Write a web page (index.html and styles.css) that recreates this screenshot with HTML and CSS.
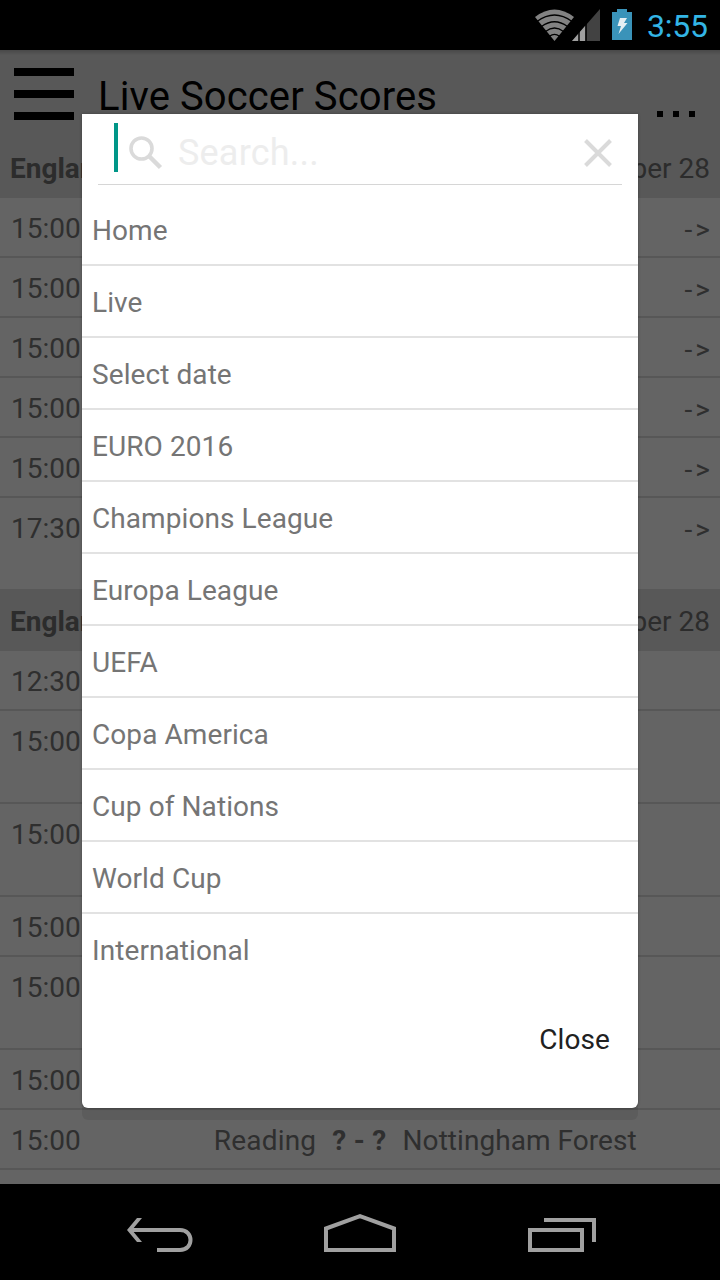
FILE: index.html
```
<!DOCTYPE html>
<html lang="en">
<head>
    <meta charset="UTF-8">
    <meta name="viewport" content="width=device-width, initial-scale=1.0">
    <title>Live Soccer Scores</title>
    <link rel="stylesheet" href="styles.css">
</head>
<body>
    <div class="status-bar">
        <svg class="signal-icons" width="68" height="34" viewBox="0 0 68 34">
            <!-- wifi -->
            <path d="M2 9 Q21.500 -6 41 9 L21.500 33 Z" fill="#828282"/>
            <path d="M4 13.500 Q21.500 0.500 39 13.500 M8.500 18.500 Q21.500 9 34.500 18.500 M12.500 23.500 Q21.500 16.500 30.500 23.500 M16.500 28.200 Q21.500 24.500 26.500 28.200" fill="none" stroke="#000" stroke-width="1.300"/>
            <!-- mobile signal -->
            <path d="M39 33 L67 1 V33 Z" fill="#424242"/>
            <path d="M39 33 L52.500 17.500 V33 Z" fill="#a0a0a0"/>
            <path d="M46 22 V33 M53 16 V33" stroke="#000" stroke-width="1.500"/>
        </svg>
        <svg class="battery-icon" width="20" height="31" viewBox="0 0 20 31">
            <path d="M5 0 H15 V3 H20 V31 H0 V3 H5 Z" fill="#3a93b9"/>
            <path d="M8 9 H15 L12 14 H15.500 L6.500 25 L9 17 H5.500 Z" fill="#e6eff3"/>
        </svg>
        <span class="clock">3:55</span>
    </div>

    <div class="app">
        <div class="app-bar">
            <div class="menu-icon"><i></i><i></i><i></i></div>
            <div class="app-title">Live Soccer Scores</div>
            <div class="more-icon"><i></i><i></i><i></i></div>
        </div>

        <div class="league"><b>England</b><span>November 28</span></div>
        <div class="match"><span>15:00</span><span class="arrow">-&gt;</span></div>
        <div class="match"><span>15:00</span><span class="arrow">-&gt;</span></div>
        <div class="match"><span>15:00</span><span class="arrow">-&gt;</span></div>
        <div class="match"><span>15:00</span><span class="arrow">-&gt;</span></div>
        <div class="match"><span>15:00</span><span class="arrow">-&gt;</span></div>
        <div class="match last"><span>17:30</span><span class="arrow">-&gt;</span></div>

        <div class="league"><b>England</b><span>November 28</span></div>
        <div class="match"><span>12:30</span></div>
        <div class="match tall"><span>15:00</span></div>
        <div class="match tall"><span>15:00</span></div>
        <div class="match"><span>15:00</span></div>
        <div class="match tall"><span>15:00</span></div>
        <div class="match"><span>15:00</span></div>
        <div class="match">
            <span>15:00</span>
            <span class="home">Reading</span>
            <b class="score">? - ?</b>
            <span class="away">Nottingham Forest</span>
        </div>
    </div>

    <div class="overlay">
        <div class="dialog">
            <div class="search">
                <i class="cursor"></i>
                <svg class="search-icon" width="34" height="34" viewBox="0 0 34 34" fill="none" stroke="#dadada">
                    <circle cx="12.500" cy="12.500" r="10.500" stroke-width="3.600"/>
                    <path d="M20.500 20.500 L31.500 31.500" stroke-width="4.500"/>
                </svg>
                <span class="placeholder">Search...</span>
                <svg class="clear-icon" width="28" height="28" viewBox="0 0 28 28" fill="none" stroke="#dadada" stroke-width="4">
                    <path d="M1.500 1.500 L26.500 26.500 M26.500 1.500 L1.500 26.500"/>
                </svg>
            </div>
            <ul class="menu">
                <li>Home</li>
                <li>Live</li>
                <li>Select date</li>
                <li>EURO 2016</li>
                <li>Champions League</li>
                <li>Europa League</li>
                <li>UEFA</li>
                <li>Copa America</li>
                <li>Cup of Nations</li>
                <li>World Cup</li>
                <li>International</li>
            </ul>
            <div class="close">Close</div>
        </div>
    </div>

    <div class="nav-bar">
        <svg width="720" height="96" viewBox="0 0 720 96" fill="none" stroke="#a0a0a0" stroke-width="4">
            <!-- back -->
            <path d="M131 46 H180 C194 46 194 66 180 66 H157"/>
            <path d="M137 34 H142 L132 46 L142 58 H137 L127 46 Z" fill="#a0a0a0" stroke="none"/>
            <!-- home -->
            <path d="M326 66 V44.500 L360 32.200 L394 44.500 V66 Z"/>
            <!-- recent -->
            <path d="M530 46 H582 V66 H530 Z M544 36 H594 V58"/>
        </svg>
    </div>
</body>
</html>
```
FILE: styles.css
```
* {
    box-sizing: border-box;
}
body {
    margin: 0;
    width: 720px;
    height: 1280px;
    overflow: hidden;
    display: flex;
    flex-direction: column;
    position: relative;
    font-family: Roboto, sans-serif;
    font-size: 28px;
    color: #757575;
    background: #000;
}
.status-bar {
    height: 50px;
    flex: none;
    display: flex;
    justify-content: flex-end;
    align-items: flex-start;
    padding-right: 12px;
    background: #000;
}
.signal-icons {
    margin: 8px 11px 0 0;
}
.battery-icon {
    margin: 9px 15px 0 0;
}
.clock {
    width: 61px;
    font-size: 32px;
    line-height: 52px;
    letter-spacing: -0.2px;
    color: #33b5e5;
}
.app {
    height: 1134px;
    flex: none;
    overflow: hidden;
    background: #fafafa;
}
.app-bar {
    height: 86px;
    display: flex;
    align-items: flex-start;
    padding: 18px 25px 0 14px;
    background: linear-gradient(#b4b4b4, #dcdcdc 5px);
    color: #000;
}
.menu-icon {
    width: 60px;
    height: 52px;
    display: flex;
    flex-direction: column;
    justify-content: space-between;
}
.menu-icon i {
    height: 8px;
    background: #000;
}
.app-title {
    flex: 1;
    margin-left: 24px;
    font-size: 40px;
    line-height: 58px;
    letter-spacing: 0.1px;
}
.more-icon {
    display: flex;
    gap: 10px;
    margin-top: 43px;
}
.more-icon i {
    width: 6px;
    height: 6px;
    background: #000;
}
.league {
    height: 62px;
    display: flex;
    justify-content: space-between;
    padding: 0 10px;
    line-height: 66px;
    background: #dcdcdc;
    color: #6e6e6e;
}
.match {
    height: 60px;
    display: flex;
    padding: 0 10px 0 11px;
    line-height: 62px;
    border-bottom: 2px solid #dadada;
}
.match.tall {
    height: 93px;
}
.match.last {
    height: 91px;
    border-bottom: none;
}
.arrow {
    margin-left: auto;
    margin-right: -3px;
    line-height: 64px;
    letter-spacing: 3px;
}
.home {
    margin-left: 133px;
    letter-spacing: 0.2px;
}
.score {
    margin: 0 16px;
    letter-spacing: 0.3px;
}
.away {
    letter-spacing: 0.05px;
}
.overlay {
    position: absolute;
    top: 50px;
    left: 0;
    width: 720px;
    height: 1134px;
    padding: 64px 82px 0;
    background: rgba(0, 0, 0, 0.6);
}
.dialog {
    height: 994px;
    background: #fff;
    border-radius: 0 0 6px 6px;
    box-shadow: 0 12px 0 rgba(0, 0, 0, 0.07), 0 0 3px rgba(0, 0, 0, 0.3);
}
.search {
    height: 71px;
    margin: 0 16px;
    padding: 9px 10px 0 16px;
    display: flex;
    align-items: flex-start;
    border-bottom: 1px solid #d6d6d6;
}
.cursor {
    width: 4px;
    height: 49px;
    background: #009688;
}
.search-icon {
    margin: 13px 0 0 11px;
}
.placeholder {
    margin-left: 15px;
    font-size: 36px;
    line-height: 60px;
    letter-spacing: 0.2px;
    color: #ededed;
}
.clear-icon {
    margin: 16px 0 0 auto;
}
.menu {
    margin: 9px 0 0;
    padding: 0;
    list-style: none;
}
.menu li {
    height: 72px;
    padding-left: 10px;
    line-height: 73px;
    letter-spacing: 0.08px;
    border-bottom: 2px solid #e2e2e2;
}
.menu li:last-child {
    border-bottom: none;
}
.close {
    margin: 17px 28px 0 0;
    text-align: right;
    line-height: 74px;
    letter-spacing: 0.1px;
    color: #212121;
}
.nav-bar {
    height: 96px;
    background: #000;
}
```
